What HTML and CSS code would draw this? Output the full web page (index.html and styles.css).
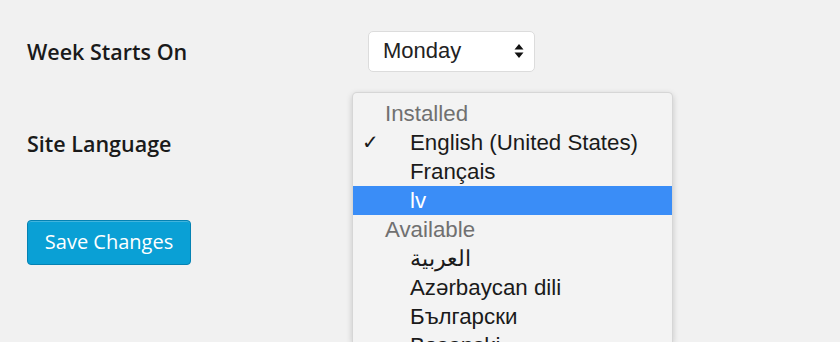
FILE: index.html
```html
<!DOCTYPE html>
<html>
<head>
<meta charset="utf-8">
<link rel="stylesheet" href="styles.css">
</head>
<body>
<div class="form">
  <div class="row row-week">
    <div class="label">Week Starts On</div>
    <div class="select">
      <span class="select-value">Monday</span>
      <svg class="select-arrows" width="10" height="16" viewBox="0 0 10 16"><path d="M5 1 L9.5 6.5 H0.5 Z M5 15 L9.5 9.5 H0.5 Z" fill="#111"/></svg>
    </div>
  </div>
  <div class="row row-lang">
    <div class="label">Site Language</div>
  </div>
  <div class="row row-btn">
    <button class="btn">Save Changes</button>
  </div>
</div>
<div class="menu">
  <div class="group">Installed</div>
  <div class="item"><span class="check">✓</span>English (United States)</div>
  <div class="item">Français</div>
  <div class="item selected">lv</div>
  <div class="group">Available</div>
  <div class="item" dir="ltr"><span dir="rtl">العربية</span></div>
  <div class="item">Azərbaycan dili</div>
  <div class="item">Български</div>
  <div class="item">Bosanski</div>
</div>
</body>
</html>
```

FILE: styles.css
```css
html, body {
  margin: 0;
  padding: 0;
  background: #f1f1f1;
  width: 840px;
  height: 342px;
  overflow: hidden;
}
.form {
  padding: 30px 0 0 27px;
  display: flex;
  flex-direction: column;
}
.row {
  display: flex;
  align-items: center;
}
.row-week {
  height: 42px;
}
.row-lang {
  margin-top: 50px;
  height: 42px;
}
.row-btn {
  margin-top: 56px;
}
.label {
  width: 341px;
  font-family: "Open Sans", sans-serif;
  font-weight: 600;
  font-size: 21.5px;
  color: #1a1a1a;
}
.select {
  box-sizing: border-box;
  width: 167px;
  height: 41px;
  background: #fff;
  border: 1px solid #dcdcdc;
  border-radius: 5px;
  display: flex;
  align-items: center;
  justify-content: space-between;
  padding: 0 10px 0 14px;
  font-family: "Liberation Sans", Arial, sans-serif;
  font-size: 22px;
  color: #222;
}
.select-arrows {
  display: block;
}
.btn {
  box-sizing: border-box;
  width: 164px;
  height: 45px;
  background: #0aa0d5;
  border: 1px solid #0582b3;
  border-radius: 4px;
  color: #fff;
  font-family: "Open Sans", sans-serif;
  font-size: 20px;
  font-weight: 500;
  padding: 0 0 2px;
  box-shadow: inset 0 1px 0 rgba(120, 200, 230, 0.5);
}
.menu {
  position: absolute;
  left: 352px;
  top: 92px;
  width: 321px;
  height: 250px;
  box-sizing: border-box;
  background: #f3f3f3;
  border: 1px solid #d6d6d6;
  border-bottom: 0;
  border-radius: 5px 5px 0 0;
  box-shadow: 0 2px 6px rgba(0, 0, 0, 0.18);
  padding-top: 6px;
  font-family: "Liberation Sans", Arial, sans-serif;
  font-size: 22.3px;
  color: #1a1a1a;
  overflow: hidden;
}
.group {
  height: 29px;
  line-height: 29px;
  padding-left: 32px;
  color: #707070;
}
.item {
  position: relative;
  height: 29px;
  line-height: 29px;
  padding-left: 57px;
}
.item.selected {
  background: #3a8df7;
  color: #fff;
}
.check {
  position: absolute;
  left: 9px;
  top: 0;
  font-size: 20px;
  font-weight: bold;
  font-family: "DejaVu Sans", sans-serif;
}
```
